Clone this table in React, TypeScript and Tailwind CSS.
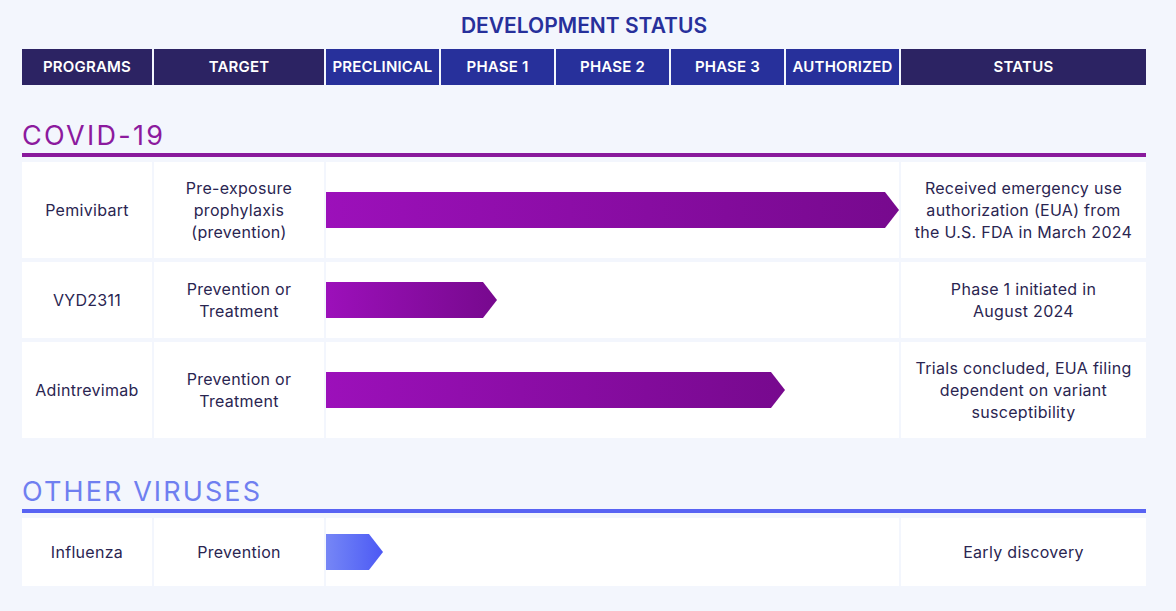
import React from "react"

type Row = {
  program: string
  target: string[]
  bar: number
  status: string[]
  height: string
}

const phases = ["PRECLINICAL", "PHASE 1", "PHASE 2", "PHASE 3", "AUTHORIZED"]

const covidRows: Row[] = [
  {
    program: "Pemivibart",
    target: ["Pre-exposure", "prophylaxis", "(prevention)"],
    bar: 573,
    status: ["Received emergency use", "authorization (EUA) from", "the U.S. FDA in March 2024"],
    height: "h-[96px]",
  },
  {
    program: "VYD2311",
    target: ["Prevention or", "Treatment"],
    bar: 171,
    status: ["Phase 1 initiated in", "August 2024"],
    height: "h-[76px]",
  },
  {
    program: "Adintrevimab",
    target: ["Prevention or", "Treatment"],
    bar: 459,
    status: ["Trials concluded, EUA filing", "dependent on variant", "susceptibility"],
    height: "h-[96px]",
  },
]

const otherRows: Row[] = [
  {
    program: "Influenza",
    target: ["Prevention"],
    bar: 57,
    status: ["Early discovery"],
    height: "h-[68px]",
  },
]

const Lines = ({ lines }: { lines: string[] }) => (
  <div>
    {lines.map((line) => (
      <div key={line}>{line}</div>
    ))}
  </div>
)

const PipelineRow = ({ row, tone }: { row: Row; tone: "purple" | "blue" }) => {
  const barClass =
    tone === "purple"
      ? "bg-linear-to-r from-[#9c10ba] to-[#77098e]"
      : "bg-linear-to-r from-[#7686f6] to-[#4d58f4]"
  return (
    <div className={`grid grid-cols-[130px_170px_573px_245px] gap-x-[2px] ${row.height}`}>
      <div className="flex items-center justify-center bg-white text-center">{row.program}</div>
      <div className="flex items-center justify-center bg-white text-center">
        <Lines lines={row.target} />
      </div>
      <div className="flex items-center bg-white">
        <div
          className={`h-9 [clip-path:polygon(0_0,calc(100%-14px)_0,100%_50%,calc(100%-14px)_100%,0_100%)] ${barClass}`}
          style={{ width: row.bar }}
        />
      </div>
      <div className="flex items-center justify-center bg-white text-center">
        <Lines lines={row.status} />
      </div>
    </div>
  )
}

export default function App() {
  return (
    <div className="min-h-screen bg-[#f3f6fd] pl-[22px] pr-[30px] pt-[12px] font-['Inter','Noto_Sans',sans-serif] text-[16px] leading-[22px] tracking-[0.3px] text-[#2a2551]">
      <h1 className="text-center text-[21px] font-semibold leading-[28px] tracking-normal text-[#27309b]">DEVELOPMENT STATUS</h1>

      <div className="mt-[9px] grid h-9 grid-cols-[130px_170px_113px_113px_113px_113px_113px_245px] gap-x-[2px] text-[15px] font-semibold tracking-[0.2px] text-white">
        <div className="flex items-center justify-center bg-[#2c2363]">PROGRAMS</div>
        <div className="flex items-center justify-center bg-[#2c2363]">TARGET</div>
        {phases.map((phase) => (
          <div key={phase} className="flex items-center justify-center bg-[#27309b]">
            {phase}
          </div>
        ))}
        <div className="flex items-center justify-center bg-[#2c2363]">STATUS</div>
      </div>

      <h2 className="mt-[34px] text-[27px] leading-[34px] tracking-[2.3px] text-[#8c1a9e]">COVID-19</h2>
      <div className="h-1 bg-[#891a9c]" />
      <div className="mt-[5px] flex flex-col gap-y-1">
        {covidRows.map((row) => (
          <PipelineRow key={row.program} row={row} tone="purple" />
        ))}
      </div>

      <h2 className="mt-[37px] text-[27px] leading-[34px] tracking-[2.1px] text-[#6f7ff0]">OTHER VIRUSES</h2>
      <div className="h-1 bg-[#5863f3]" />
      <div className="mt-[5px] flex flex-col gap-y-1">
        {otherRows.map((row) => (
          <PipelineRow key={row.program} row={row} tone="blue" />
        ))}
      </div>
    </div>
  )
}
